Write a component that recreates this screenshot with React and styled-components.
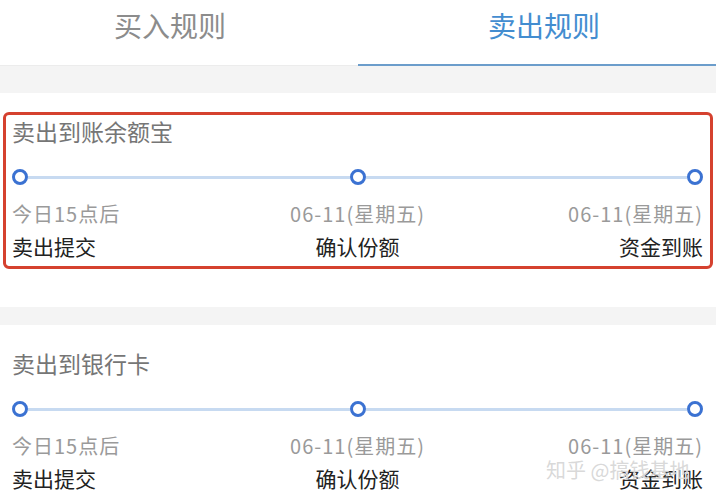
import React from "react";
import styled, { createGlobalStyle } from "styled-components";

const GlobalStyle = createGlobalStyle`
  body {
    margin: 0;
    background: #ffffff;
    font-family: "Noto Sans CJK SC", "Noto Sans", sans-serif;
  }
`;

const tabs = ["买入规则", "卖出规则"];

const routes = [
  {
    title: "卖出到账余额宝",
    marked: true,
    steps: [
      { date: "今日15点后", label: "卖出提交" },
      { date: "06-11(星期五)", label: "确认份额" },
      { date: "06-11(星期五)", label: "资金到账" },
    ],
  },
  {
    title: "卖出到银行卡",
    marked: false,
    steps: [
      { date: "今日15点后", label: "卖出提交" },
      { date: "06-11(星期五)", label: "确认份额" },
      { date: "06-11(星期五)", label: "资金到账" },
    ],
  },
];

const App = () => {
  return (
    <Page>
      <GlobalStyle />
      <TabBar>
        {tabs.map((t, i) => (
          <Tab key={t} $active={i === 1}>
            {t}
          </Tab>
        ))}
      </TabBar>
      <Gap $h={27} />
      {routes.map((r, i) => (
        <React.Fragment key={r.title}>
          {i > 0 && <Gap $h={18} />}
          <Card>
            {r.marked && <Highlight />}
            <Title>{r.title}</Title>
            <Track>
              {r.steps.map((s, j) => (
                <React.Fragment key={j}>
                  {j > 0 && <Segment />}
                  <Dot />
                </React.Fragment>
              ))}
            </Track>
            <StepRow>
              {r.steps.map((s, j) => (
                <DateText key={j} $align={j}>
                  {s.date}
                </DateText>
              ))}
            </StepRow>
            <StepRow>
              {r.steps.map((s, j) => (
                <Label key={j} $align={j}>
                  {s.label}
                </Label>
              ))}
            </StepRow>
          </Card>
        </React.Fragment>
      ))}
      <Watermark>知乎 @搞钱基地</Watermark>
    </Page>
  );
};

const Page = styled.div`
  position: relative;
  width: 716px;
  height: 500px;
  overflow: hidden;
  background: #ffffff;
`;

const TabBar = styled.div`
  display: grid;
  grid-template-columns: 358px 1fr;
  height: 66px;
  border-bottom: 1px solid #ececec;
  box-sizing: border-box;
`;

const Tab = styled.div`
  display: flex;
  justify-content: center;
  padding-top: 6px;
  padding-right: ${(p) => (p.$active ? "0" : "18px")};
  padding-left: ${(p) => (p.$active ? "14px" : "0")};
  box-sizing: border-box;
  font-size: 28px;
  line-height: 38px;
  color: ${(p) => (p.$active ? "#438dd0" : "#8c8c8c")};
  border-bottom: 2px solid ${(p) => (p.$active ? "#6b9dcb" : "transparent")};
  margin-bottom: -1px;
`;

const Gap = styled.div`
  height: ${(p) => p.$h}px;
  background: #f4f4f4;
`;

const Card = styled.div`
  position: relative;
  height: 214px;
  padding: 23px 13px 0 12px;
  box-sizing: border-box;
  display: flex;
  flex-direction: column;
`;

const Highlight = styled.div`
  position: absolute;
  left: 3px;
  right: 3px;
  top: 19px;
  height: 157px;
  border: 3px solid #d5412f;
  border-radius: 6px;
  box-sizing: border-box;
`;

const Title = styled.div`
  font-size: 23px;
  line-height: 30px;
  color: #767676;
`;

const Track = styled.div`
  display: flex;
  align-items: center;
  margin-top: 23px;
  height: 16px;
`;

const Dot = styled.div`
  width: 16px;
  height: 16px;
  border: 3.5px solid #3b72d2;
  border-radius: 50%;
  background: #ffffff;
  box-sizing: border-box;
  flex: none;
`;

const Segment = styled.div`
  flex: 1;
  height: 3px;
  background: #c7daf1;
`;

const StepRow = styled.div`
  display: grid;
  grid-template-columns: 1fr 1fr 1fr;
`;

const alignOf = (i) => (i === 0 ? "left" : i === 1 ? "center" : "right");

const DateText = styled.div`
  margin-top: 15px;
  font-size: 20px;
  line-height: 28px;
  letter-spacing: 1px;
  color: #9a9a9a;
  text-align: ${(p) => alignOf(p.$align)};
  white-space: nowrap;
`;

const Label = styled.div`
  margin-top: 4px;
  font-size: 21px;
  line-height: 28px;
  color: #222222;
  text-align: ${(p) => alignOf(p.$align)};
  white-space: nowrap;
`;

const Watermark = styled.div`
  position: absolute;
  left: 546px;
  top: 460px;
  font-size: 20px;
  line-height: 20px;
  color: rgba(200, 200, 200, 0.7);
  text-shadow: 0 0 1px #ffffff;
  pointer-events: none;
`;

export default App;
